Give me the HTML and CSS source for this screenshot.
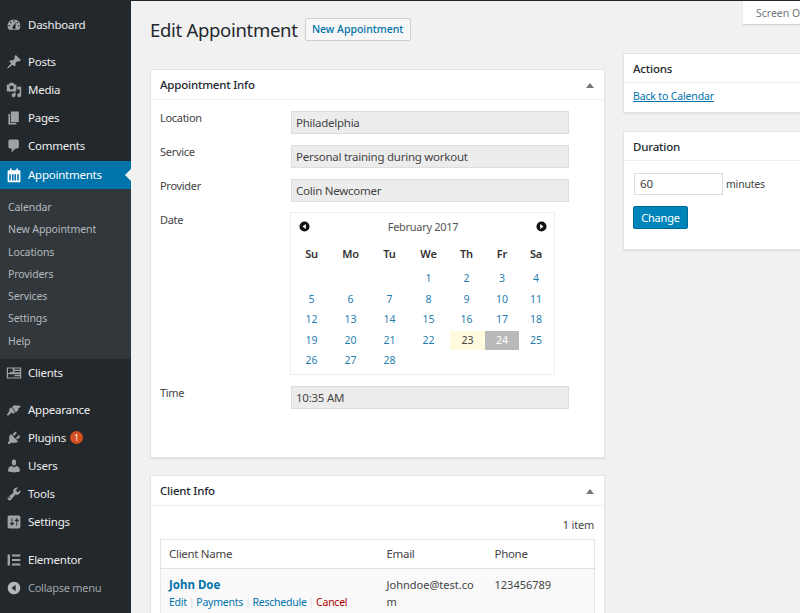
FILE: index.html
```html
<!DOCTYPE html>
<html lang="en">
<head>
<meta charset="utf-8">
<title>Edit Appointment</title>
<link rel="stylesheet" href="styles.css">
</head>
<body>
<div class="page">
  <nav class="sidebar">
    <ul class="menu first">
      <li class="item"><svg class="ico" viewBox="0 0 20 20"><path fill-rule="evenodd" d="M3.76 16h12.48c1.1-1.37 1.76-3.11 1.76-5 0-4.42-3.58-8-8-8s-8 3.58-8 8c0 1.89.66 3.63 1.76 5zM10 4c.55 0 1 .45 1 1s-.45 1-1 1-1-.45-1-1 .45-1 1-1zM6 6c.55 0 1 .45 1 1s-.45 1-1 1-1-.45-1-1 .45-1 1-1zm8 0c.55 0 1 .45 1 1s-.45 1-1 1-1-.45-1-1 .45-1 1-1zm-5.37 5.55L12 7v6c0 1.1-.9 2-2 2s-2-.9-2-2c0-.57.24-1.08.63-1.45zM4 10c.55 0 1 .45 1 1s-.45 1-1 1-1-.45-1-1 .45-1 1-1zm12 0c.55 0 1 .45 1 1s-.45 1-1 1-1-.45-1-1 .45-1 1-1z"/></svg>Dashboard</li>
    </ul>
    <ul class="menu">
      <li class="item"><svg class="ico" viewBox="0 0 20 20"><path d="M10.44 3.02l1.82-1.82 6.36 6.35-1.83 1.82c-1.05-.68-2.48-.57-3.41.36l-.75.75c-.92.93-1.04 2.35-.35 3.41l-1.83 1.82-2.41-2.41-2.8 2.79c-.42.42-3.38 2.71-3.8 2.29s1.86-3.39 2.28-3.81l2.79-2.79L4.1 9.36l1.83-1.82c1.05.69 2.48.57 3.4-.36l.75-.75c.93-.92 1.05-2.35.36-3.41z"/></svg>Posts</li>
      <li class="item"><svg class="ico" viewBox="0 0 20 20"><path fill-rule="evenodd" d="M13 11V4c0-.55-.45-1-1-1h-1.67L9 1H5L3.67 3H2c-.55 0-1 .45-1 1v7c0 .55.45 1 1 1h10c.55 0 1-.45 1-1zM7 4.5c1.38 0 2.5 1.12 2.5 2.5S8.38 9.5 7 9.5 4.5 8.38 4.5 7 5.62 4.5 7 4.5zM14 6h5v10.5c0 1.38-1.12 2.5-2.5 2.5S14 17.88 14 16.5s1.12-2.5 2.5-2.5c.17 0 .34.02.5.05V9h-3V6zm-4 8.05V13h2v3.5c0 1.38-1.12 2.5-2.5 2.5S7 17.88 7 16.5 8.12 14 9.5 14c.17 0 .34.02.5.05z"/></svg>Media</li>
      <li class="item"><svg class="ico" viewBox="0 0 20 20"><path d="M6 15V2h10v13H6zm-1 1h8v2H3V5h2v11z"/></svg>Pages</li>
      <li class="item"><svg class="ico" viewBox="0 0 20 20"><path d="M5 2h9c1.1 0 2 .9 2 2v7c0 1.1-.9 2-2 2h-2l-5 5v-5H5c-1.1 0-2-.9-2-2V4c0-1.1.9-2 2-2z"/></svg>Comments</li>
      <li class="item current"><svg class="ico" viewBox="0 0 20 20"><path fill-rule="evenodd" d="M3 4h2V2h2v2h6V2h2v2h2c.6 0 1 .4 1 1v13c0 .6-.4 1-1 1H3c-.6 0-1-.4-1-1V5c0-.6.4-1 1-1zm1 5v8h2V9H4zm3.5 0v8h2V9h-2zm3 0v8h2V9h-2zm3.5 0v8h2V9h-2z"/></svg>Appointments</li>
    </ul>
    <ul class="submenu">
      <li>Calendar</li>
      <li>New Appointment</li>
      <li>Locations</li>
      <li>Providers</li>
      <li>Services</li>
      <li>Settings</li>
      <li>Help</li>
    </ul>
    <ul class="menu">
      <li class="item"><svg class="ico" viewBox="0 0 20 20"><path fill-rule="evenodd" d="M1 3h18v14H1V3zm1.500 1.500v5.500h2l1-2 1 1 1-1 1 2V4.500h-6zm8 0V6h7V4.500h-7zm0 3V9h7V7.500h-7zM2.500 11.500V15.500h15V14H10.500v-1.500h7V11.500H2.500z"/></svg>Clients</li>
    </ul>
    <ul class="menu group">
      <li class="item"><svg class="ico" viewBox="0 0 20 20"><path d="M19 5l-3.500 3.200-.8 3-2.700 1.600-4.300-7 2.500-1.600 3.300.3L19 5zM7 6.500l4.300 6.800-2.300 1.300-2-1.500-4.500 4L1 16l3.500-5L3.500 9 7 6.500z"/></svg>Appearance</li>
      <li class="item"><svg class="ico" viewBox="0 0 20 20"><path d="M13.11 4.36L9.87 7.6 8 5.73l3.24-3.24c.35-.34 1.05-.2 1.56.32.52.51.66 1.21.31 1.55zm-8 1.77l.91-1.12 9.01 9.01-1.19.84c-.71.71-2.63 1.16-3.82 1.16H6.14L4.9 17.26c-.59.59-1.54.59-2.12 0-.59-.58-.59-1.53 0-2.12l1.24-1.24v-3.88c0-1.13.4-3.19 1.09-3.89zm7.26 3.97l3.24-3.24c.34-.35 1.04-.21 1.55.31.52.51.66 1.21.31 1.55l-3.24 3.25z"/></svg>Plugins<span class="badge">1</span></li>
      <li class="item"><svg class="ico" viewBox="0 0 20 20"><path d="M10 9.25c-2.27 0-2.75-3.45-2.75-3.45C6.98 4.01 7.8 2 9.96 2c2.17 0 2.99 2.01 2.72 3.8 0 0-.41 3.45-2.68 3.45zM10 11.97L12.72 10c2.39 0 4.52 2.33 4.52 4.53v2.49s-3.65 1.13-7.24 1.13c-3.65 0-7.24-1.13-7.24-1.13v-2.49c0-2.25 1.94-4.48 4.47-4.48z"/></svg>Users</li>
      <li class="item"><svg class="ico" viewBox="0 0 20 20"><path fill-rule="evenodd" d="M16.68 9.77c-1.34 1.34-3.3 1.67-4.95.99l-5.41 6.52c-.99.99-2.59.99-3.57 0-.99-.98-.99-2.58 0-3.57l6.52-5.42c-.68-1.65-.35-3.61.99-4.95 1.28-1.28 3.12-1.62 4.72-1.06l-2.89 2.89 2.82 2.82 2.86-2.87c.53 1.58.18 3.39-1.09 4.65zM4.85 15.15c-.41.41-1.08.41-1.49 0-.41-.41-.41-1.08 0-1.49.41-.41 1.08-.41 1.49 0 .41.41.41 1.08 0 1.49z"/></svg>Tools</li>
      <li class="item"><svg class="ico" viewBox="0 0 20 20"><path fill-rule="evenodd" d="M18 16V4c0-1.1-.9-2-2-2H4c-1.1 0-2 .9-2 2v12c0 1.1.9 2 2 2h12c1.1 0 2-.9 2-2zM8 11h1c.55 0 1 .45 1 1s-.45 1-1 1H8v1.5c0 .28-.22.5-.5.5s-.5-.22-.5-.5V13H6c-.55 0-1-.45-1-1s.45-1 1-1h1V5.5c0-.28.22-.5.5-.5s.5.22.5.5V11zm5-2h-1c-.55 0-1-.45-1-1s.45-1 1-1h1V5.500c0-.28.22-.5.5-.5s.5.22.5.5V7h1c.55 0 1 .45 1 1s-.45 1-1 1h-1v5.500c0 .28-.22.5-.5.5s-.5-.22-.5-.5V9z"/></svg>Settings</li>
    </ul>
    <ul class="menu group last">
      <li class="item"><svg class="ico" viewBox="0 0 20 20"><path d="M2 3h3v14H2zM7.500 3H18v2.500H7.500zM7.500 8.700H18v2.500H7.500zM7.500 14.500H18V17H7.500z"/></svg>Elementor</li>
      <li class="item collapse"><svg class="ico" viewBox="0 0 20 20"><path fill-rule="evenodd" d="M10 2.16c4.33 0 7.84 3.51 7.84 7.84s-3.51 7.84-7.84 7.84S2.16 14.33 2.16 10 5.67 2.16 10 2.160zM12 14V6l-5 4z"/></svg>Collapse menu</li>
    </ul>
  </nav>

  <main class="content">
    <div class="screen-tab">Screen Options</div>
    <header class="title-row">
      <h1>Edit Appointment</h1>
      <a class="add-new">New Appointment</a>
    </header>
    <div class="columns">
      <div class="col-main">
        <section class="box">
          <div class="box-head"><h2>Appointment Info</h2><span class="toggle"></span></div>
          <div class="box-body info">
            <div class="row"><label>Location</label><div class="field">Philadelphia</div></div>
            <div class="row"><label>Service</label><div class="field">Personal training during workout</div></div>
            <div class="row"><label>Provider</label><div class="field">Colin Newcomer</div></div>
            <div class="row"><label>Date</label>
              <div class="calendar">
                <div class="cal-head">
                  <svg class="arrow" viewBox="0 0 12 12"><circle cx="6" cy="6" r="5.500"/><path class="arrow-in" d="M7.500 3.200v5.600L3.800 6z"/></svg>
                  <span>February 2017</span>
                  <svg class="arrow" viewBox="0 0 12 12"><circle cx="6" cy="6" r="5.500"/><path class="arrow-in" d="M4.500 3.200v5.600L8.200 6z"/></svg>
                </div>
                <div class="cal-grid cal-days">
                  <b>Su</b><b>Mo</b><b>Tu</b><b>We</b><b>Th</b><b>Fr</b><b>Sa</b>
                </div>
                <div class="cal-grid cal-dates">
                  <i></i><i></i><i></i><a>1</a><a>2</a><a>3</a><a>4</a>
                  <a>5</a><a>6</a><a>7</a><a>8</a><a>9</a><a>10</a><a>11</a>
                  <a>12</a><a>13</a><a>14</a><a>15</a><a>16</a><a>17</a><a>18</a>
                  <a>19</a><a>20</a><a>21</a><a>22</a><a class="today">23</a><a class="selected">24</a><a>25</a>
                  <a>26</a><a>27</a><a>28</a>
                </div>
              </div>
            </div>
            <div class="row"><label>Time</label><div class="field">10:35 AM</div></div>
          </div>
        </section>
        <section class="box">
          <div class="box-head"><h2>Client Info</h2><span class="toggle"></span></div>
          <div class="box-body clients">
            <div class="count">1 item</div>
            <table class="table">
              <thead><tr><th class="c1">Client Name</th><th class="c2">Email</th><th>Phone</th></tr></thead>
              <tbody><tr>
                <td><a class="name">John Doe</a>
                  <div class="actions"><a>Edit</a><s>|</s><a>Payments</a><s>|</s><a>Reschedule</a><s>|</s><a class="cancel">Cancel</a></div></td>
                <td class="email">Johndoe@test.com</td>
                <td>123456789</td>
              </tr></tbody>
            </table>
          </div>
        </section>
      </div>
      <aside class="col-side">
        <section class="box">
          <div class="box-head"><h2>Actions</h2></div>
          <div class="box-body side-link"><a>Back to Calendar</a></div>
        </section>
        <section class="box">
          <div class="box-head"><h2>Duration</h2></div>
          <div class="box-body duration">
            <div class="dur-row"><div class="dur-input">60</div><span>minutes</span></div>
            <a class="primary">Change</a>
          </div>
        </section>
      </aside>
    </div>
  </main>
</div>
</body>
</html>
```
FILE: styles.css
```css
* { box-sizing: border-box; }
html, body { margin: 0; padding: 0; height: 613px; overflow: hidden; }
body { font-family: "Noto Sans", "Open Sans", sans-serif; font-size: 11.5px; color: #444; background: #f1f1f1; }
ul { list-style: none; margin: 0; padding: 0; }
a { color: #0073aa; }

.page { display: flex; height: 613px; border-top: 1px solid #23282d; }

.sidebar { width: 131px; flex: none; background: #23282d; color: #eee; padding-top: 10px; }
.menu.first { margin-bottom: 9px; }
.menu.group { margin-top: 9px; }
.menu.last { margin-top: 10px; }
.item { position: relative; display: flex; align-items: center; height: 28px; padding: 0 0 1px 6px; font-size: 11.5px; letter-spacing: -.25px; color: #eee; }
.ico { width: 16px; height: 16px; margin-right: 6px; fill: #9ea3a8; flex: none; }
.current { margin-top: 1px; background: #0073aa; color: #fff; }
.current .ico { fill: #fff; }
.current::after { content: ""; position: absolute; right: 0; top: 8px; border: 6px solid transparent; border-left-width: 0; border-right-color: #f1f1f1; }
.collapse { color: #9ea3a8; font-size: 11px; }
.collapse .ico { fill: #b4b9be; }
.badge { display: inline-block; width: 13px; height: 13px; margin-left: 4px; border-radius: 50%; background: #d54e21; color: #fff; font-size: 8px; line-height: 13px; text-align: center; }
.submenu { background: #32373c; padding: 7px 0; height: 170px; color: #b4b9be; }
.submenu li { height: 22.3px; line-height: 22.3px; padding-left: 8px; font-size: 10.5px; letter-spacing: -.1px; }

.content { position: relative; flex: 1; min-width: 0; padding: 0 0 0 19px; overflow: hidden; }
.screen-tab { position: absolute; top: 0; left: 612px; width: 120px; height: 23px; background: #fff; padding: 5px 0 0 13px; font-size: 10.5px; color: #72777c; box-shadow: 0 1px 1px rgba(0,0,0,.12); white-space: nowrap; }
.title-row { display: flex; align-items: center; height: 52px; padding-top: 4px; }
h1 { margin: 0; font-size: 18.5px; letter-spacing: -.3px; font-weight: 400; color: #23282d; }
.add-new { display: block; width: 106px; height: 23px; margin: 1px 0 0 7px; border: 1px solid #ccd0d4; border-radius: 2px; background: #f7f7f7; color: #0073aa; font-size: 10.5px; font-weight: 500; line-height: 21px; text-align: center; white-space: nowrap; }

.columns { display: flex; gap: 18px; align-items: flex-start; }
.col-main { width: 455px; flex: none; padding-top: 16px; }
.col-side { width: 280px; flex: none; }
.box { background: #fff; box-shadow: 0 1px 1px rgba(0,0,0,.06); border: 1px solid #e5e5e5; margin-bottom: 17px; }
.col-side .box { margin-bottom: 18px; }
.box-head { position: relative; height: 30px; border-bottom: 1px solid #eee; padding-left: 9px; display: flex; align-items: center; }
.col-side .box-head { height: 29px; }
h2 { margin: 0; font-size: 11.5px; letter-spacing: -.2px; font-weight: 500; color: #23282d; }
.toggle { position: absolute; right: 10px; top: 13px; border: 4px solid transparent; border-top-width: 0; border-bottom: 5px solid #72777c; }

.info { height: 357px; padding: 11px 35px 0 9px; }
.row { display: flex; margin-bottom: 11px; }
.row label { width: 131px; flex: none; font-size: 11px; letter-spacing: -.3px; line-height: 14px; }
.field { width: 279px; height: 23px; background: #ececec; border: 1px solid #ddd; padding-left: 4px; font-size: 11.5px; letter-spacing: -.25px; line-height: 21px; color: #444; }
.calendar { width: 265px; height: 163px; margin-top: -1px; margin-left: -1px; border: 1px solid #eee; background: #fff; }
.cal-head { display: flex; justify-content: space-between; align-items: center; padding: 3px 7px 0 8px; height: 24px; font-size: 11px; letter-spacing: -.3px; color: #555; }
.arrow { width: 11px; height: 11px; fill: #111; }
.arrow-in { fill: #fff; }
.cal-grid { display: grid; grid-template-columns: 39px 39px 39px 39px 37px 34px 34px; padding-left: 1px; text-align: center; }
.cal-days { height: 32px; align-items: end; padding-bottom: 8px; font-size: 11px; letter-spacing: -.2px; }
.cal-days b { font-weight: 600; color: #333; line-height: 14px; }
.cal-dates { grid-auto-rows: 20.6px; font-size: 10.5px; line-height: 19px; color: #1f80b0; }
.cal-dates a { display: block; height: 19px; color: #1f80b0; }
.cal-dates i { display: block; }
.cal-dates .today { background: #fffbdc; color: #444; margin-left: 2px; }
.cal-dates .selected { background: #b9b9b9; color: #fff; }

.clients { padding: 10px 10px 0 9px; }
.count { text-align: right; font-size: 11px; letter-spacing: -.2px; height: 23px; padding-top: 1px; line-height: 16px; }
.table { width: 435px; border-collapse: collapse; border: 1px solid #e5e5e5; table-layout: fixed; }
.table th { height: 29px; text-align: left; font-weight: 400; font-size: 11.5px; letter-spacing: -.3px; padding: 0 8px 2px; border-bottom: 1px solid #e1e1e1; color: #444; }
.table .c1 { width: 218px; }
.table .c2 { width: 108px; padding-right: 0; }
.table td { background: #f9f9f9; vertical-align: top; padding: 7px 8px; font-size: 11px; line-height: 17px; }
.name { font-weight: 700; font-size: 11.5px; }
.actions { margin-top: 1px; font-size: 10.5px; letter-spacing: -.25px; white-space: nowrap; }
.actions s { text-decoration: none; color: #ddd; margin: 0 2px; }
.actions .cancel { color: #a00; }
.email { word-break: break-all; }

.side-link { height: 29px; padding: 6px 9px; font-size: 10.5px; letter-spacing: -.15px; }
.side-link a { text-decoration: underline; }
.duration { height: 88px; padding: 12px 10px; font-size: 10.5px; letter-spacing: -.2px; }
.dur-row { display: flex; align-items: center; gap: 3px; }
.dur-input { width: 89px; height: 22px; border: 1px solid #ddd; padding-left: 5px; line-height: 20px; font-size: 11.5px; }
.primary { display: block; width: 55px; height: 23px; margin-top: 11px; margin-left: -1px; background: #0085ba; border: 1px solid #006799; border-radius: 2px; color: #fff; text-align: center; line-height: 21px; font-size: 11px; }
```
